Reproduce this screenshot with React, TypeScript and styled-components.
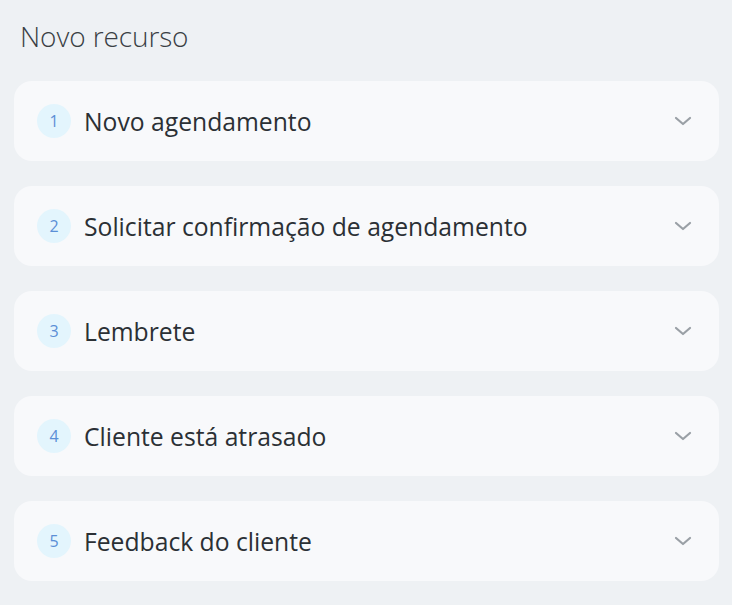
import React from "react";
import styled, { createGlobalStyle } from "styled-components";

const Global = createGlobalStyle`
  html, body { margin: 0; padding: 0; background: #eef1f4; }
  body { font-family: "Open Sans", "Noto Sans", sans-serif; }
`;

const Page = styled.div`
  padding: 17px 13px 24px 14px;
  display: flex;
  flex-direction: column;
`;

const Title = styled.h1`
  margin: 0 0 26px 6px;
  font-size: 28px;
  font-weight: 300;
  color: #3a3f45;
  line-height: 38px;
  letter-spacing: -0.1px;
`;

const List = styled.div`
  display: flex;
  flex-direction: column;
  gap: 25px;
`;

const Card = styled.div`
  height: 80px;
  background: #f8f9fb;
  border-radius: 18px;
  display: flex;
  align-items: center;
  padding: 0 26px 0 23px;
  box-sizing: border-box;
`;

const Badge = styled.span`
  width: 34px;
  height: 34px;
  border-radius: 50%;
  background: #e3f5fd;
  color: #5b8fd6;
  font-size: 16px;
  display: flex;
  align-items: center;
  justify-content: center;
  flex-shrink: 0;
`;

const Label = styled.span`
  margin-left: 13px;
  flex: 1;
  font-size: 24.7px;
  color: #2b3035;
  font-weight: 400;
`;

const Chevron = () => (
  <svg width="20" height="20" viewBox="0 0 20 20" fill="none">
    <path d="M3 7l7 6 7-6" stroke="#9aa0a6" strokeWidth="2.2" strokeLinecap="round" strokeLinejoin="round" />
  </svg>
);

const items = [
  "Novo agendamento",
  "Solicitar confirmação de agendamento",
  "Lembrete",
  "Cliente está atrasado",
  "Feedback do cliente",
];

export default function App() {
  return (
    <>
      <Global />
      <Page>
        <Title>Novo recurso</Title>
        <List>
          {items.map((t, i) => (
            <Card key={t}>
              <Badge>{i + 1}</Badge>
              <Label>{t}</Label>
              <Chevron />
            </Card>
          ))}
        </List>
      </Page>
    </>
  );
}
